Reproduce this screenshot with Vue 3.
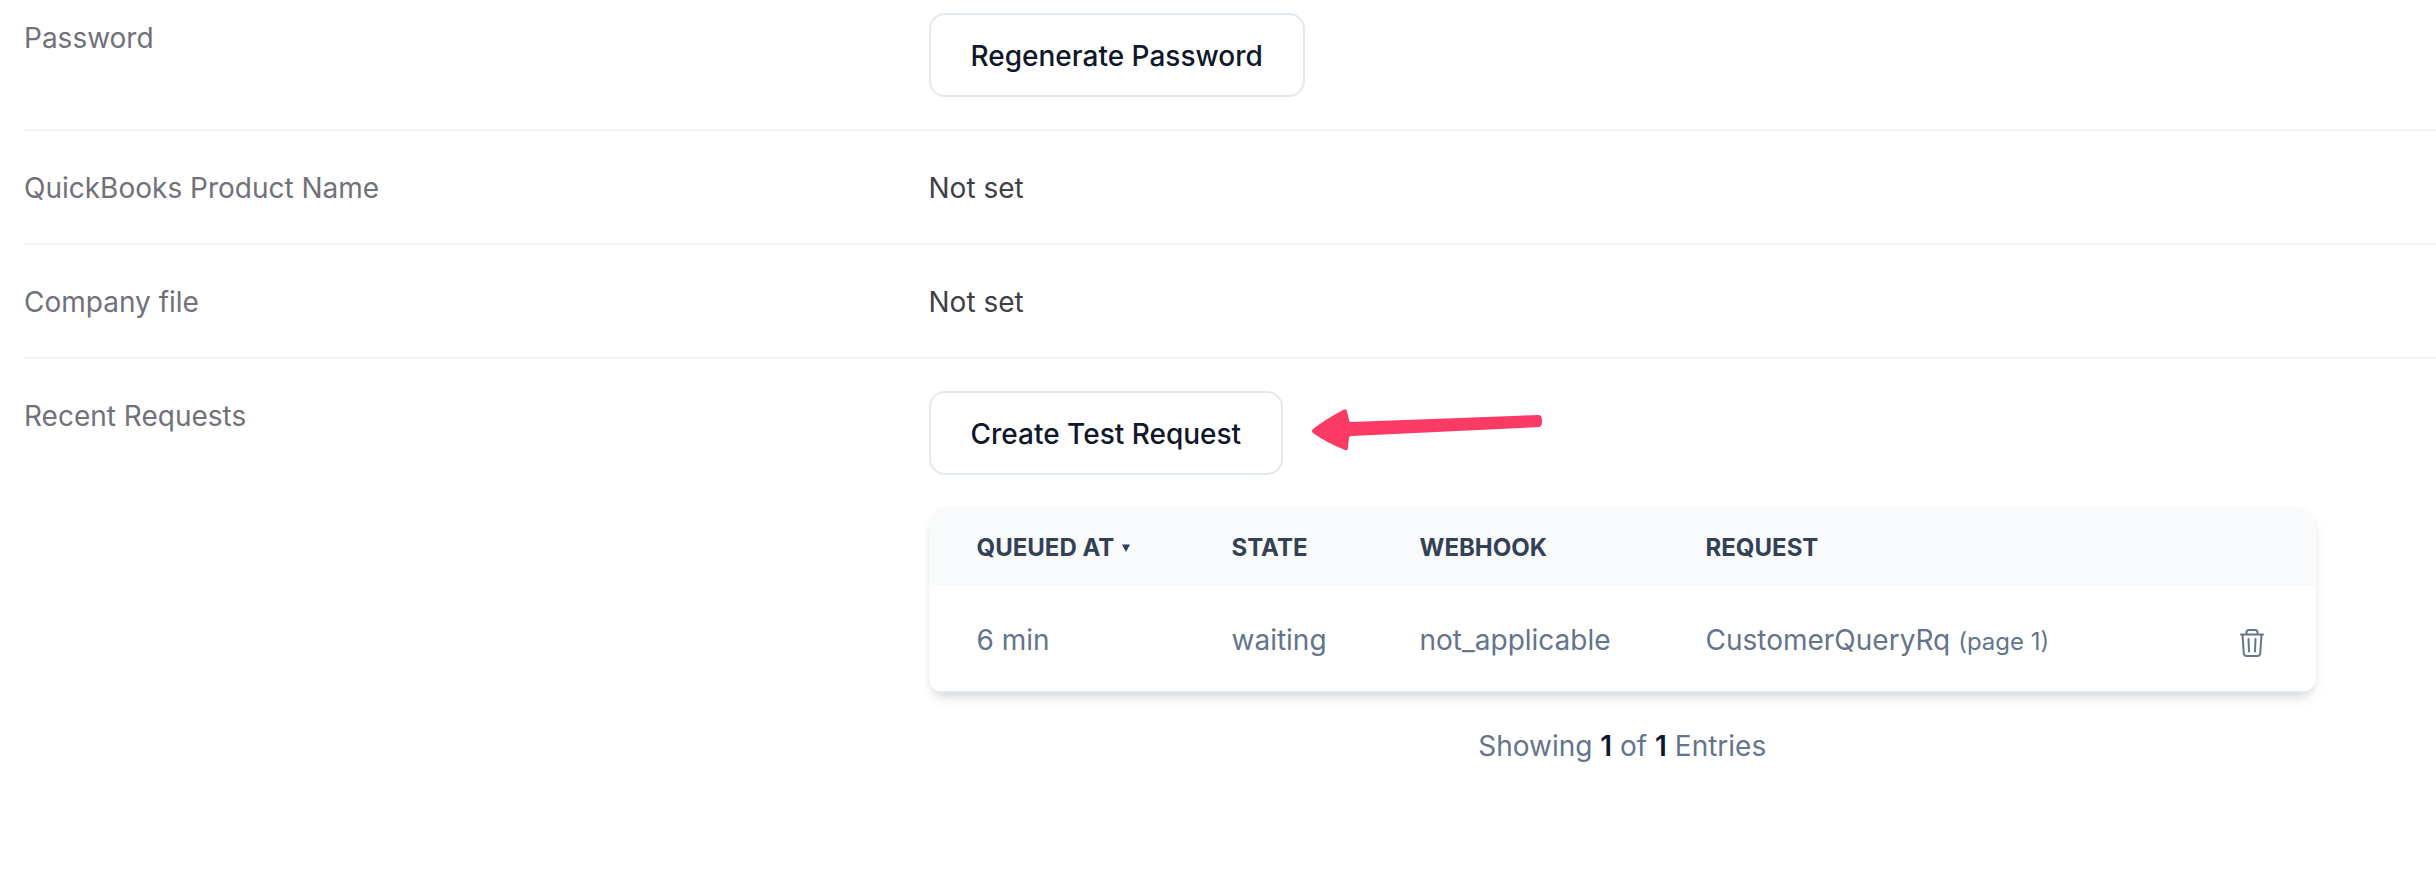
<script setup>
const requests = [
  { queuedAt: '6 min', state: 'waiting', webhook: 'not_applicable', request: 'CustomerQueryRq', page: 1 },
]
</script>

<template>
  <main class="settings">
    <dl class="list">
      <div class="row">
        <dt>Password</dt>
        <dd><button type="button" class="btn">Regenerate Password</button></dd>
      </div>
      <div class="row">
        <dt>QuickBooks Product Name</dt>
        <dd>Not set</dd>
      </div>
      <div class="row">
        <dt>Company file</dt>
        <dd>Not set</dd>
      </div>
      <div class="row">
        <dt>Recent Requests</dt>
        <dd class="recent">
          <div class="actions">
            <button type="button" class="btn">Create Test Request</button>
            <svg class="arrow" viewBox="0 0 232 52" aria-hidden="true">
              <path d="M2 22Q0 24 2 26Q16 36 34 43Q37 44 37 40L38 31Q38 29 41 29L228 20Q231 20 231 14Q231 8 228 8L40 15Q38 15 38 13L36 4Q35 1 32 3Q15 12 2 22Z" />
            </svg>
          </div>
          <div class="card">
            <table>
              <colgroup>
                <col class="c-queued" /><col class="c-state" /><col class="c-hook" /><col /><col class="c-del" />
              </colgroup>
              <thead>
                <tr>
                  <th scope="col">
                    <span class="sort">QUEUED AT
                      <svg class="caret" viewBox="0 0 8 8" aria-hidden="true"><path d="M0 0.500h8L4 8z" /></svg>
                    </span>
                  </th>
                  <th scope="col">STATE</th>
                  <th scope="col">WEBHOOK</th>
                  <th scope="col">REQUEST</th>
                  <th scope="col" aria-label="Actions"></th>
                </tr>
              </thead>
              <tbody>
                <tr v-for="r in requests" :key="r.request">
                  <td>{{ r.queuedAt }}</td>
                  <td>{{ r.state }}</td>
                  <td>{{ r.webhook }}</td>
                  <td>{{ r.request }} <small>(page {{ r.page }})</small></td>
                  <td class="delete">
                    <button type="button" class="trash" aria-label="Delete request">
                      <svg viewBox="0 0 24 28" aria-hidden="true">
                        <path d="M1 5.500H23M6.500 5V3.500Q6.500 1 9 1H15Q17.500 1 17.500 3.500V5M2.500 6L3.800 24.500Q4 27 6.500 27H17.500Q20 27 20.200 24.500L21.500 6M8.500 10L9 22.500M15.500 10L15 22.500" />
                      </svg>
                    </button>
                  </td>
                </tr>
              </tbody>
            </table>
          </div>
          <p class="count">Showing <b>1</b> of <b>1</b> Entries</p>
        </dd>
      </div>
    </dl>
  </main>
</template>

<style>
body {
  margin: 0;
  background: #fff;
}
</style>

<style scoped>
.settings {
  padding-left: 24px;
  font-family: Inter, "Liberation Sans", sans-serif;
  font-size: 28px;
  line-height: 48px;
  color: #3f3f46;
}
.list {
  margin: 0;
}
.row {
  display: grid;
  grid-template-columns: 3fr 5fr;
  padding: 32px 0;
  border-top: 2px solid #f4f4f5;
}
.row:first-child {
  padding-top: 13px;
  border-top: 0;
}
dt,
dd {
  line-height: 50px;
}
.row:nth-child(2),
.row:nth-child(3) {
  padding-bottom: 30px;
}
dt {
  color: #71717a;
}
dd {
  margin: 0;
  min-width: 0;
}
.recent {
  padding-right: 120px;
}
.btn {
  display: block;
  box-sizing: border-box;
  height: 84px;
  padding: 2px 40px 0;
  border: 2px solid #e2e8f0;
  border-radius: 16px;
  background: #fff;
  color: #0f172a;
  font: inherit;
  font-weight: 500;
  white-space: nowrap;
}
.actions {
  display: flex;
  align-items: center;
  gap: 28px;
}
.arrow {
  width: 232px;
  height: 52px;
  fill: #fb3b64;
}
.card {
  margin-top: 32px;
  border-radius: 16px;
  overflow: hidden;
  box-shadow: 0 8px 12px -2px rgba(0, 0, 0, 0.1), 0 4px 8px -4px rgba(0, 0, 0, 0.1);
}
table {
  width: 100%;
  border-collapse: separate;
  border-spacing: 0;
  table-layout: fixed;
}
.c-queued {
  width: 255px;
}
.c-state {
  width: 188px;
}
.c-hook {
  width: 286px;
}
.c-del {
  width: 124px;
}
th,
td {
  box-sizing: border-box;
  padding: 2px 0 0 48px;
  text-align: left;
  white-space: nowrap;
}
th {
  height: 80px;
  background: #f8fafc;
  color: #334155;
  font-size: 24px;
  font-weight: 700;
}
.sort {
  display: flex;
  align-items: center;
  gap: 8px;
}
.caret {
  width: 8px;
  height: 8px;
  fill: #334155;
}
td {
  height: 106px;
  border-bottom: 2px solid #e2e8f0;
  color: #64748b;
}
td.delete {
  padding-top: 8px;
}
small {
  font-size: 24px;
  line-height: 1;
}
.trash {
  display: block;
  padding: 0;
  border: 0;
  background: none;
}
.trash svg {
  display: block;
  width: 24px;
  height: 28px;
  fill: none;
  stroke: #64748b;
  stroke-width: 2;
  stroke-linecap: round;
  stroke-linejoin: round;
}
.count {
  margin: 28px 0 0;
  text-align: center;
  color: #64748b;
}
.count b {
  color: #0f172a;
  font-weight: 600;
}
</style>
